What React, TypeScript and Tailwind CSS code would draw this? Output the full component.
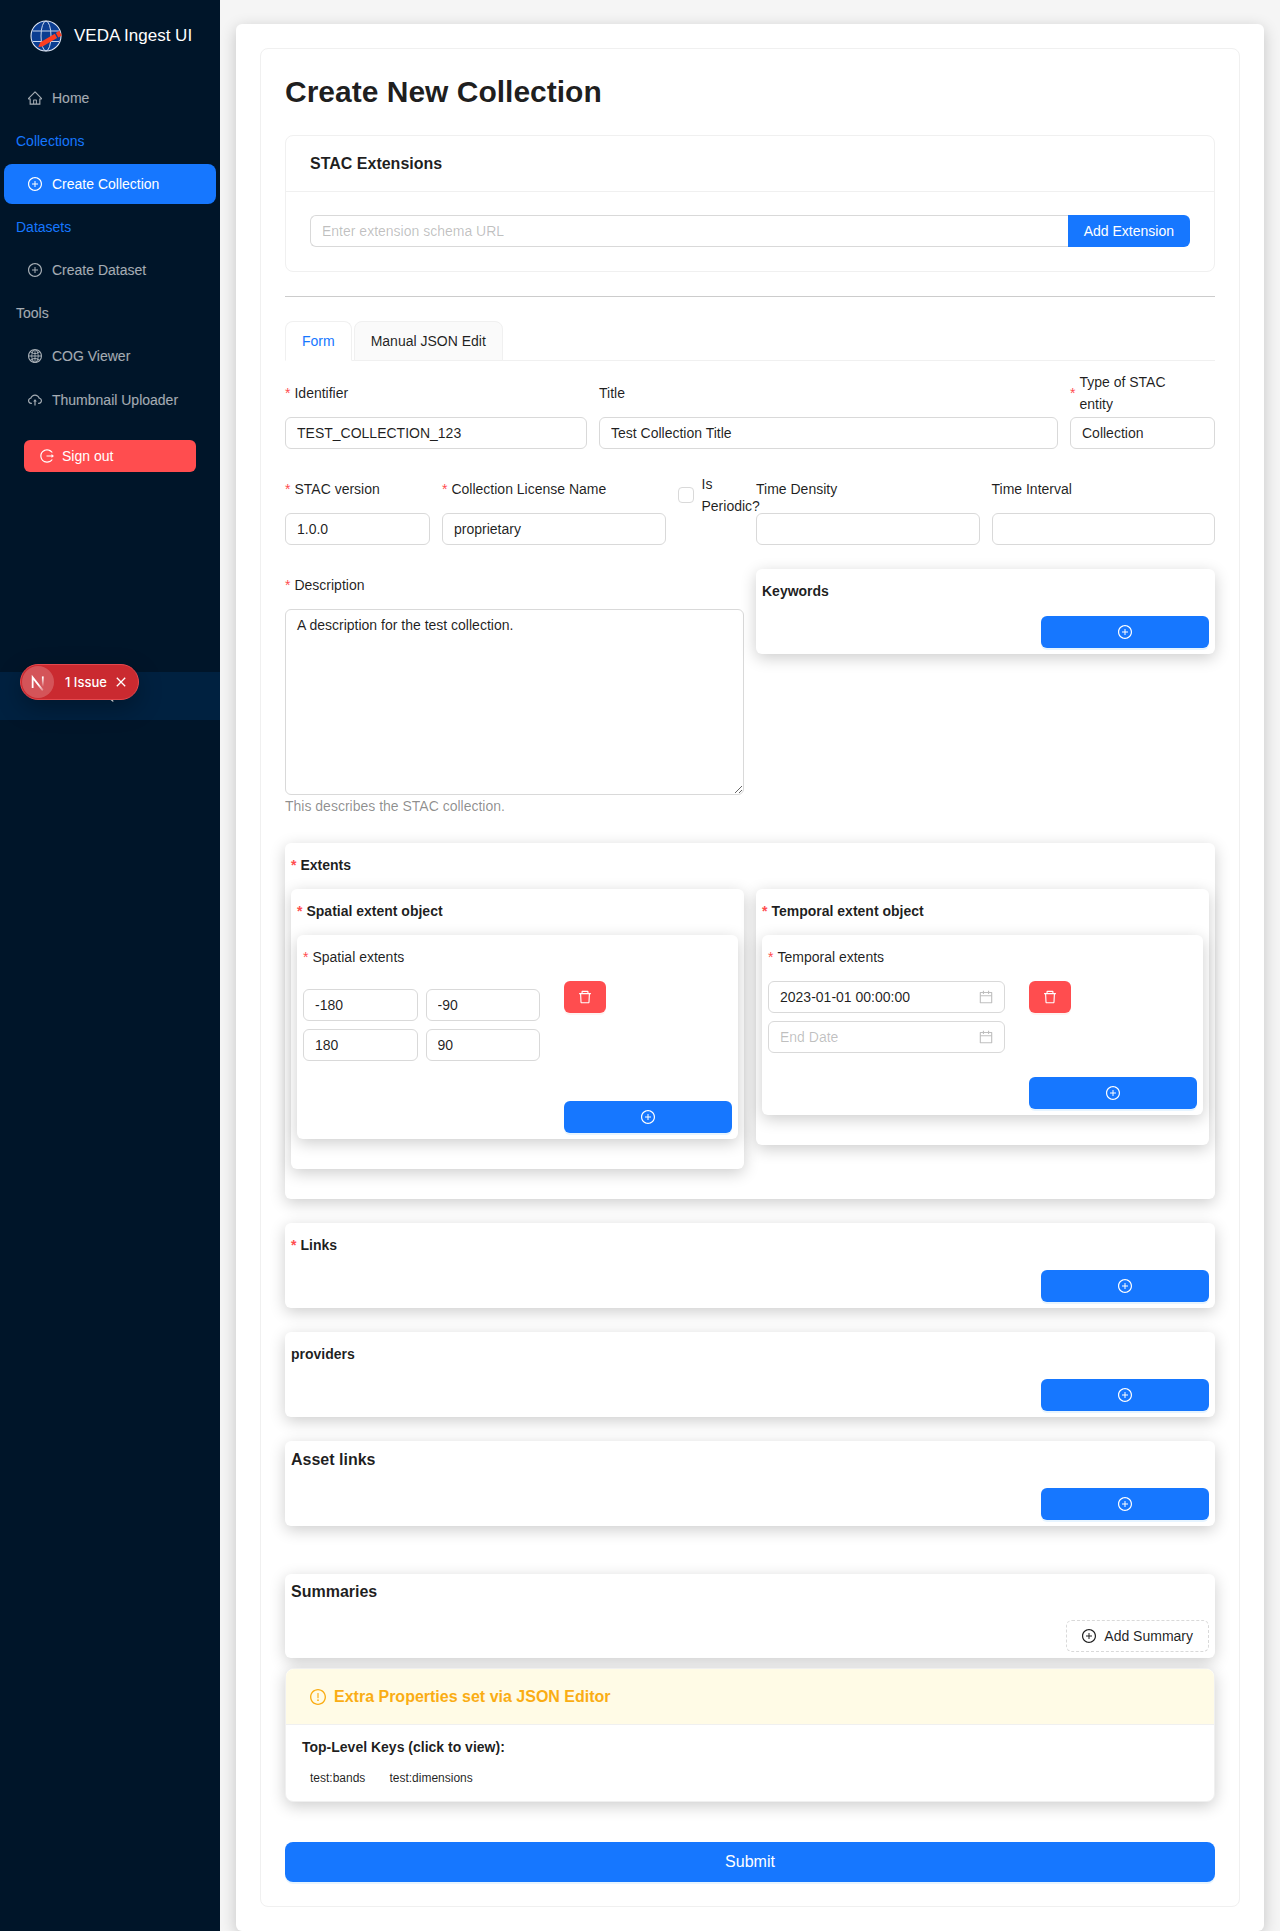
import { useId, type ReactNode } from "react";
import type { IconType } from "react-icons";
import {
  AiOutlineCalendar,
  AiOutlineCloudUpload,
  AiOutlineDelete,
  AiOutlineExclamationCircle,
  AiOutlineGlobal,
  AiOutlineHome,
  AiOutlineLeft,
  AiOutlineLogout,
  AiOutlinePlusCircle,
} from "react-icons/ai";

const inputClass =
  "block h-8 w-full min-w-0 rounded-md border border-[#d9d9d9] bg-white px-[11px] text-sm text-black/88 outline-none placeholder:text-black/25 focus:border-[#1677ff]";

// Crops the glyph's built-in margin so that it fills its em box.
function Icon({ as: Glyph, className = "shrink-0" }: { as: IconType; className?: string }) {
  return <Glyph viewBox="64 64 896 896" className={className} aria-hidden="true" />;
}

function Logo() {
  return (
    <svg width="32" height="32" viewBox="0 0 32 32" fill="none" className="shrink-0" aria-hidden="true">
      <circle cx="16" cy="16" r="15" fill="#0b3d91" />
      <g stroke="#c9d6ec" strokeWidth="1">
        <ellipse cx="16" cy="16" rx="5" ry="15" />
        <path d="M3 11h26M3 21.500h26" />
      </g>
      <circle cx="16" cy="16" r="15" stroke="#dfe7f5" strokeWidth="1.100" />
      <path d="M8.300 27l2-4.800L24.800 13.800l2.300 4.200L12.500 26.400z" fill="#fc3d21" />
      <path d="M25.900 13.100l3.400-2.400 2.600 4.700-3.600 2z" fill="#fc3d21" />
    </svg>
  );
}

function MenuLink({ icon, label, active = false }: { icon: IconType; label: string; active?: boolean }) {
  return (
    <a
      href="#"
      aria-current={active ? "page" : undefined}
      className={
        active
          ? "mx-1 flex h-10 items-center gap-2.5 rounded-lg bg-[#1677ff] px-6 text-white"
          : "mx-1 flex h-10 items-center gap-2.5 rounded-lg px-6 text-white/65"
      }
    >
      <Icon as={icon} />
      {label}
    </a>
  );
}

function MenuGroup({ label, link = false }: { label: string; link?: boolean }) {
  return (
    <div className={link ? "px-4 py-2 text-[#1677ff]" : "px-4 py-2 text-white/65"}>
      {link ? <a href="#">{label}</a> : label}
    </div>
  );
}

function IssueBadge() {
  return (
    <div className="absolute bottom-5 left-5 flex h-9 items-center rounded-full border border-[#e5484d] bg-[#ca2a30] pr-[7px] pl-px font-[Inter] text-[13px] font-medium whitespace-nowrap text-white shadow-[0_8px_24px_rgba(0,0,0,0.3)]">
      <button type="button" aria-label="Open developer tools" className="flex size-8 items-center justify-center rounded-full bg-white/20">
        <svg width="32" height="32" viewBox="0 0 40 40" fill="none" aria-hidden="true">
          <defs>
            <linearGradient id="nDiagonal" x1="21" y1="23" x2="27" y2="31" gradientUnits="userSpaceOnUse">
              <stop stopColor="white" />
              <stop offset="1" stopColor="white" stopOpacity="0.200" />
            </linearGradient>
            <linearGradient id="nStem" x1="25" y1="14" x2="25" y2="26" gradientUnits="userSpaceOnUse">
              <stop stopColor="white" />
              <stop offset="1" stopColor="white" stopOpacity="0" />
            </linearGradient>
          </defs>
          <path d="M13.300 27.500V14.200L26 30.500" stroke="url(#nDiagonal)" strokeWidth="2.200" />
          <path d="M26 13v13" stroke="url(#nStem)" strokeWidth="2.200" />
        </svg>
      </button>
      <span className="ml-[11px]">1 Issue</span>
      <button type="button" aria-label="Dismiss issue" className="ml-1 flex size-5 items-center justify-center">
        <svg width="10" height="10" viewBox="0 0 10 10" stroke="white" strokeWidth="1.300" aria-hidden="true">
          <path d="M0.800 0.800l8.400 8.400M9.200 0.800L0.800 9.200" />
        </svg>
      </button>
    </div>
  );
}

function Sidebar() {
  return (
    <aside className="w-[220px] shrink-0 bg-[#001529]">
      <div className="relative flex min-h-[720px] flex-col">
        <div className="flex items-center gap-3 pt-5 pl-7.5">
          <Logo />
          <span className="text-[17px] leading-8 whitespace-nowrap text-white">VEDA Ingest UI</span>
        </div>
        <nav className="mt-6.5 flex flex-col gap-1">
          <MenuLink icon={AiOutlineHome} label="Home" />
          <MenuGroup label="Collections" link />
          <MenuLink icon={AiOutlinePlusCircle} label="Create Collection" active />
          <MenuGroup label="Datasets" link />
          <MenuLink icon={AiOutlinePlusCircle} label="Create Dataset" />
          <MenuGroup label="Tools" />
          <MenuLink icon={AiOutlineGlobal} label="COG Viewer" />
          <MenuLink icon={AiOutlineCloudUpload} label="Thumbnail Uploader" />
        </nav>
        <button type="button" className="mx-6 mt-5 flex h-8 items-center gap-2 rounded-md bg-[#ff4d4f] px-4 text-white">
          <Icon as={AiOutlineLogout} />
          Sign out
        </button>
        <button type="button" aria-label="Collapse sidebar" className="mt-auto flex h-12 items-center justify-center bg-[#002140] text-white">
          <Icon as={AiOutlineLeft} />
        </button>
        <IssueBadge />
      </div>
    </aside>
  );
}

function LabelText({ children, required = false }: { children: ReactNode; required?: boolean }) {
  return (
    <>
      {required && <span className="mr-1 leading-none text-[#ff4d4f]">*</span>}
      <span>{children}</span>
    </>
  );
}

function Field({ label, value, required = false, span }: { label: string; value?: string; required?: boolean; span: string }) {
  const id = useId();
  return (
    <div className={span}>
      <label htmlFor={id} className="mb-2 flex h-8 items-center pr-4">
        <LabelText required={required}>{label}</LabelText>
      </label>
      <input id={id} type="text" defaultValue={value} className={inputClass} />
    </div>
  );
}

function Panel({ children }: { children: ReactNode }) {
  return <section className="rounded-md bg-white p-1.5 shadow-[0_4px_16px_rgba(0,0,0,0.2)]">{children}</section>;
}

function PanelLabel({ children, required = false, bold = true }: { children: ReactNode; required?: boolean; bold?: boolean }) {
  return (
    <h3 className={bold ? "mb-2 flex h-8 items-center font-bold" : "mb-2 flex h-8 items-center"}>
      <LabelText required={required}>{children}</LabelText>
    </h3>
  );
}

function AddButton({ label }: { label: string }) {
  return (
    <button
      type="button"
      aria-label={label}
      className="ml-auto flex h-8 w-42 items-center justify-center rounded-md bg-[#1677ff] text-white shadow-[0_2px_0_rgba(5,145,255,0.1)]"
    >
      <Icon as={AiOutlinePlusCircle} />
    </button>
  );
}

function DeleteButton({ label }: { label: string }) {
  return (
    <button
      type="button"
      aria-label={label}
      className="flex h-8 w-10.5 items-center justify-center rounded-md bg-[#ff4d4f] text-white shadow-[0_2px_0_rgba(255,38,5,0.06)]"
    >
      <Icon as={AiOutlineDelete} />
    </button>
  );
}

function ListPanel({ title, required = false }: { title: string; required?: boolean }) {
  return (
    <Panel>
      <PanelLabel required={required}>{title}</PanelLabel>
      <div className="pt-px">
        <AddButton label={`Add ${title}`} />
      </div>
    </Panel>
  );
}

function DateInput({ label, value }: { label: string; value?: string }) {
  return (
    <div className="flex h-8 items-center rounded-md border border-[#d9d9d9] bg-white px-[11px]">
      <input type="text" aria-label={label} placeholder={label} defaultValue={value} className="w-full min-w-0 outline-none placeholder:text-black/25" />
      <Icon as={AiOutlineCalendar} className="shrink-0 text-black/25" />
    </div>
  );
}

function ExtentObject({ title, listTitle, children }: { title: string; listTitle: string; children: ReactNode }) {
  return (
    <Panel>
      <PanelLabel required>{title}</PanelLabel>
      <div className="mb-6">
        <Panel>
          <PanelLabel required bold={false}>
            {listTitle}
          </PanelLabel>
          <div className="mb-6 flex gap-6">
            <div className="min-w-0 flex-1">{children}</div>
            <div className="w-42">
              <DeleteButton label={`Remove ${listTitle}`} />
            </div>
          </div>
          <AddButton label={`Add ${listTitle}`} />
        </Panel>
      </div>
    </Panel>
  );
}

const bounds = [
  ["Minimum longitude", "-180"],
  ["Minimum latitude", "-90"],
  ["Maximum longitude", "180"],
  ["Maximum latitude", "90"],
];

export default function App() {
  return (
    <div className="flex min-h-screen bg-[#f5f5f5] font-['Liberation_Sans',Arial,sans-serif] text-sm leading-[22px] text-black/88">
      <Sidebar />
      <main className="mx-4 mt-6 min-w-0 flex-1 rounded-md bg-white p-6 shadow-[0_4px_16px_rgba(0,0,0,0.2)]">
        <div className="rounded-lg border border-[#f0f0f0] p-6">
          <h1 className="mb-6 text-3xl leading-[38px] font-bold">Create New Collection</h1>

          <section className="rounded-lg border border-[#f0f0f0]">
            <h2 className="flex h-14 items-center border-b border-[#f0f0f0] px-6 text-base font-bold">STAC Extensions</h2>
            <div className="flex px-6 pt-[23px] pb-6">
              <input
                type="text"
                aria-label="Extension schema URL"
                placeholder="Enter extension schema URL"
                className="h-8 min-w-0 flex-1 rounded-l-md border border-r-0 border-[#d9d9d9] px-[11px] outline-none placeholder:text-black/25"
              />
              <button type="button" className="h-8 rounded-r-md bg-[#1677ff] px-4 text-white">
                Add Extension
              </button>
            </div>
          </section>

          <hr className="my-6 border-[#ccc]" />

          <div role="tablist" className="flex gap-0.5 border-b border-[#f0f0f0]">
            <button type="button" role="tab" aria-selected="true" className="-mb-px h-10 rounded-t-lg border border-[#f0f0f0] border-b-white bg-white px-4 text-[#1677ff]">
              Form
            </button>
            <button type="button" role="tab" aria-selected="false" className="-mb-px h-10 rounded-t-lg border border-[#f0f0f0] bg-[#fafafa] px-4">
              Manual JSON Edit
            </button>
          </div>

          <form className="mt-4">
            <div className="grid grid-cols-24 gap-x-3 gap-y-6">
              <Field span="col-span-8" label="Identifier" value="TEST_COLLECTION_123" required />
              <Field span="col-span-12" label="Title" value="Test Collection Title" />
              <Field span="col-span-4" label="Type of STAC entity" value="Collection" required />

              <Field span="col-span-4" label="STAC version" value="1.0.0" required />
              <Field span="col-span-6" label="Collection License Name" value="proprietary" required />
              <label className="col-span-2 flex items-center gap-2 self-start">
                <input type="checkbox" className="size-4 shrink-0 appearance-none rounded-sm border border-[#d9d9d9] bg-white checked:bg-[#1677ff]" />
                <span>Is Periodic?</span>
              </label>
              <Field span="col-span-6" label="Time Density" />
              <Field span="col-span-6" label="Time Interval" />

              <div className="col-span-12">
                <label htmlFor="description" className="mb-2 flex h-8 items-center">
                  <LabelText required>Description</LabelText>
                </label>
                <textarea
                  id="description"
                  rows={8}
                  defaultValue="A description for the test collection."
                  className="block w-full rounded-md border border-[#d9d9d9] px-[11px] py-1 outline-none"
                />
                <p className="min-h-6 text-black/45">This describes the STAC collection.</p>
              </div>
              <div className="col-span-12">
                <ListPanel title="Keywords" />
              </div>
            </div>

            <div className="mt-6 flex flex-col gap-6">
              <Panel>
                <PanelLabel required>Extents</PanelLabel>
                <div className="mb-6 grid grid-cols-2 items-start gap-3">
                  <ExtentObject title="Spatial extent object" listTitle="Spatial extents">
                    <div className="grid grid-cols-2 gap-2 pt-2 pb-4">
                      {bounds.map(([label, value]) => (
                        <input key={label} type="text" aria-label={label} defaultValue={value} className={inputClass} />
                      ))}
                    </div>
                  </ExtentObject>
                  <ExtentObject title="Temporal extent object" listTitle="Temporal extents">
                    <div className="flex flex-col gap-2">
                      <DateInput label="Start Date" value="2023-01-01 00:00:00" />
                      <DateInput label="End Date" />
                    </div>
                  </ExtentObject>
                </div>
              </Panel>
              <ListPanel title="Links" required />
              <ListPanel title="providers" />
              <Panel>
                <h3 className="mb-4 text-base leading-[25px] font-bold">Asset links</h3>
                <AddButton label="Add asset link" />
              </Panel>
            </div>

            <div className="mt-12">
              <Panel>
                <h3 className="mb-4 text-base leading-6 font-bold">Summaries</h3>
                <button
                  type="button"
                  className="ml-auto flex h-8 items-center gap-2 rounded-md border border-dashed border-[#d9d9d9] bg-white px-[15px]"
                >
                  <Icon as={AiOutlinePlusCircle} />
                  Add Summary
                </button>
              </Panel>
            </div>

            <section className="mt-2.5 rounded-lg border border-[#f0f0f0] bg-white shadow-[0_4px_16px_rgba(0,0,0,0.2)]">
              <h3 className="flex h-14 items-center gap-2 rounded-t-lg border-b border-[#f0f0f0] bg-[#fffbe6] px-6 text-base font-bold text-[#faad14]">
                <Icon as={AiOutlineExclamationCircle} />
                Extra Properties set via JSON Editor
              </h3>
              <div className="px-4 pt-[11px] pb-[13px]">
                <p className="font-bold">Top-Level Keys (click to view):</p>
                <div className="mt-2.5 flex gap-2 text-xs leading-5">
                  <button type="button" className="px-2">
                    test:bands
                  </button>
                  <button type="button" className="px-2">
                    test:dimensions
                  </button>
                </div>
              </div>
            </section>

            <button
              type="submit"
              className="mt-10 block h-10 w-full rounded-lg bg-[#1677ff] text-base text-white shadow-[0_2px_0_rgba(5,145,255,0.1)]"
            >
              Submit
            </button>
          </form>
        </div>
      </main>
    </div>
  );
}
